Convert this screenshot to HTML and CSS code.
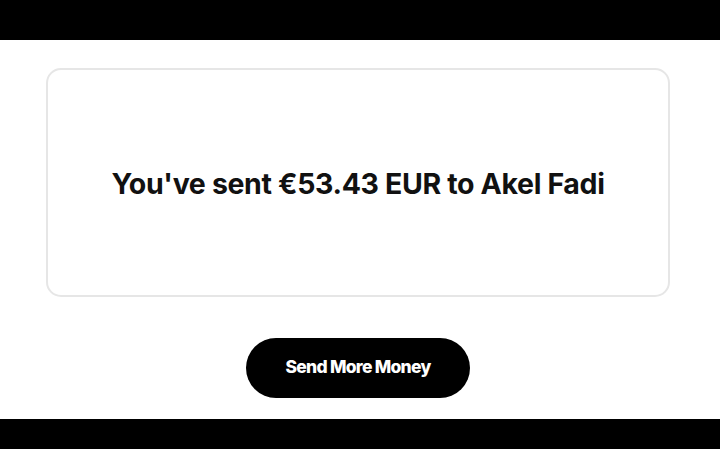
FILE: index.html
```html
<!DOCTYPE html>
<html>
<head>
<meta charset="utf-8">
<link rel="stylesheet" href="styles.css">
</head>
<body>
<div class="topbar"></div>
<main class="content">
  <section class="card">
    <h1 class="message">You've sent €53.43 EUR to Akel Fadi</h1>
  </section>
  <button class="send-btn">Send More Money</button>
</main>
<div class="bottombar"></div>
</body>
</html>
```
FILE: styles.css
```css
* { box-sizing: border-box; }
html, body { margin: 0; padding: 0; background: #fff; }
body {
  width: 720px;
  height: 449px;
  overflow: hidden;
  display: flex;
  flex-direction: column;
  font-family: Inter, "Liberation Sans", sans-serif;
}
.topbar { height: 40px; background: #000; flex: none; }
.content {
  flex: 1;
  display: flex;
  flex-direction: column;
  align-items: center;
  padding-top: 28px;
}
.card {
  width: 624px;
  height: 229px;
  margin-left: -4px;
  border: 2px solid #e6e6e6;
  border-radius: 15px;
  display: flex;
  align-items: center;
  justify-content: center;
}
.message {
  margin: 0;
  font-size: 28.5px;
  font-weight: 700;
  color: #111;
  letter-spacing: -0.35px;
  padding-top: 2px;
}
.send-btn {
  margin-top: 41px;
  margin-left: -4px;
  width: 224px;
  height: 60px;
  border: none;
  border-radius: 30px;
  background: #000;
  color: #fff;
  font-family: Inter, "Liberation Sans", sans-serif;
  font-size: 17.5px;
  font-weight: 800;
  letter-spacing: -0.75px;
  padding-bottom: 4px;
}
.bottombar { height: 30px; background: #000; flex: none; }
```
